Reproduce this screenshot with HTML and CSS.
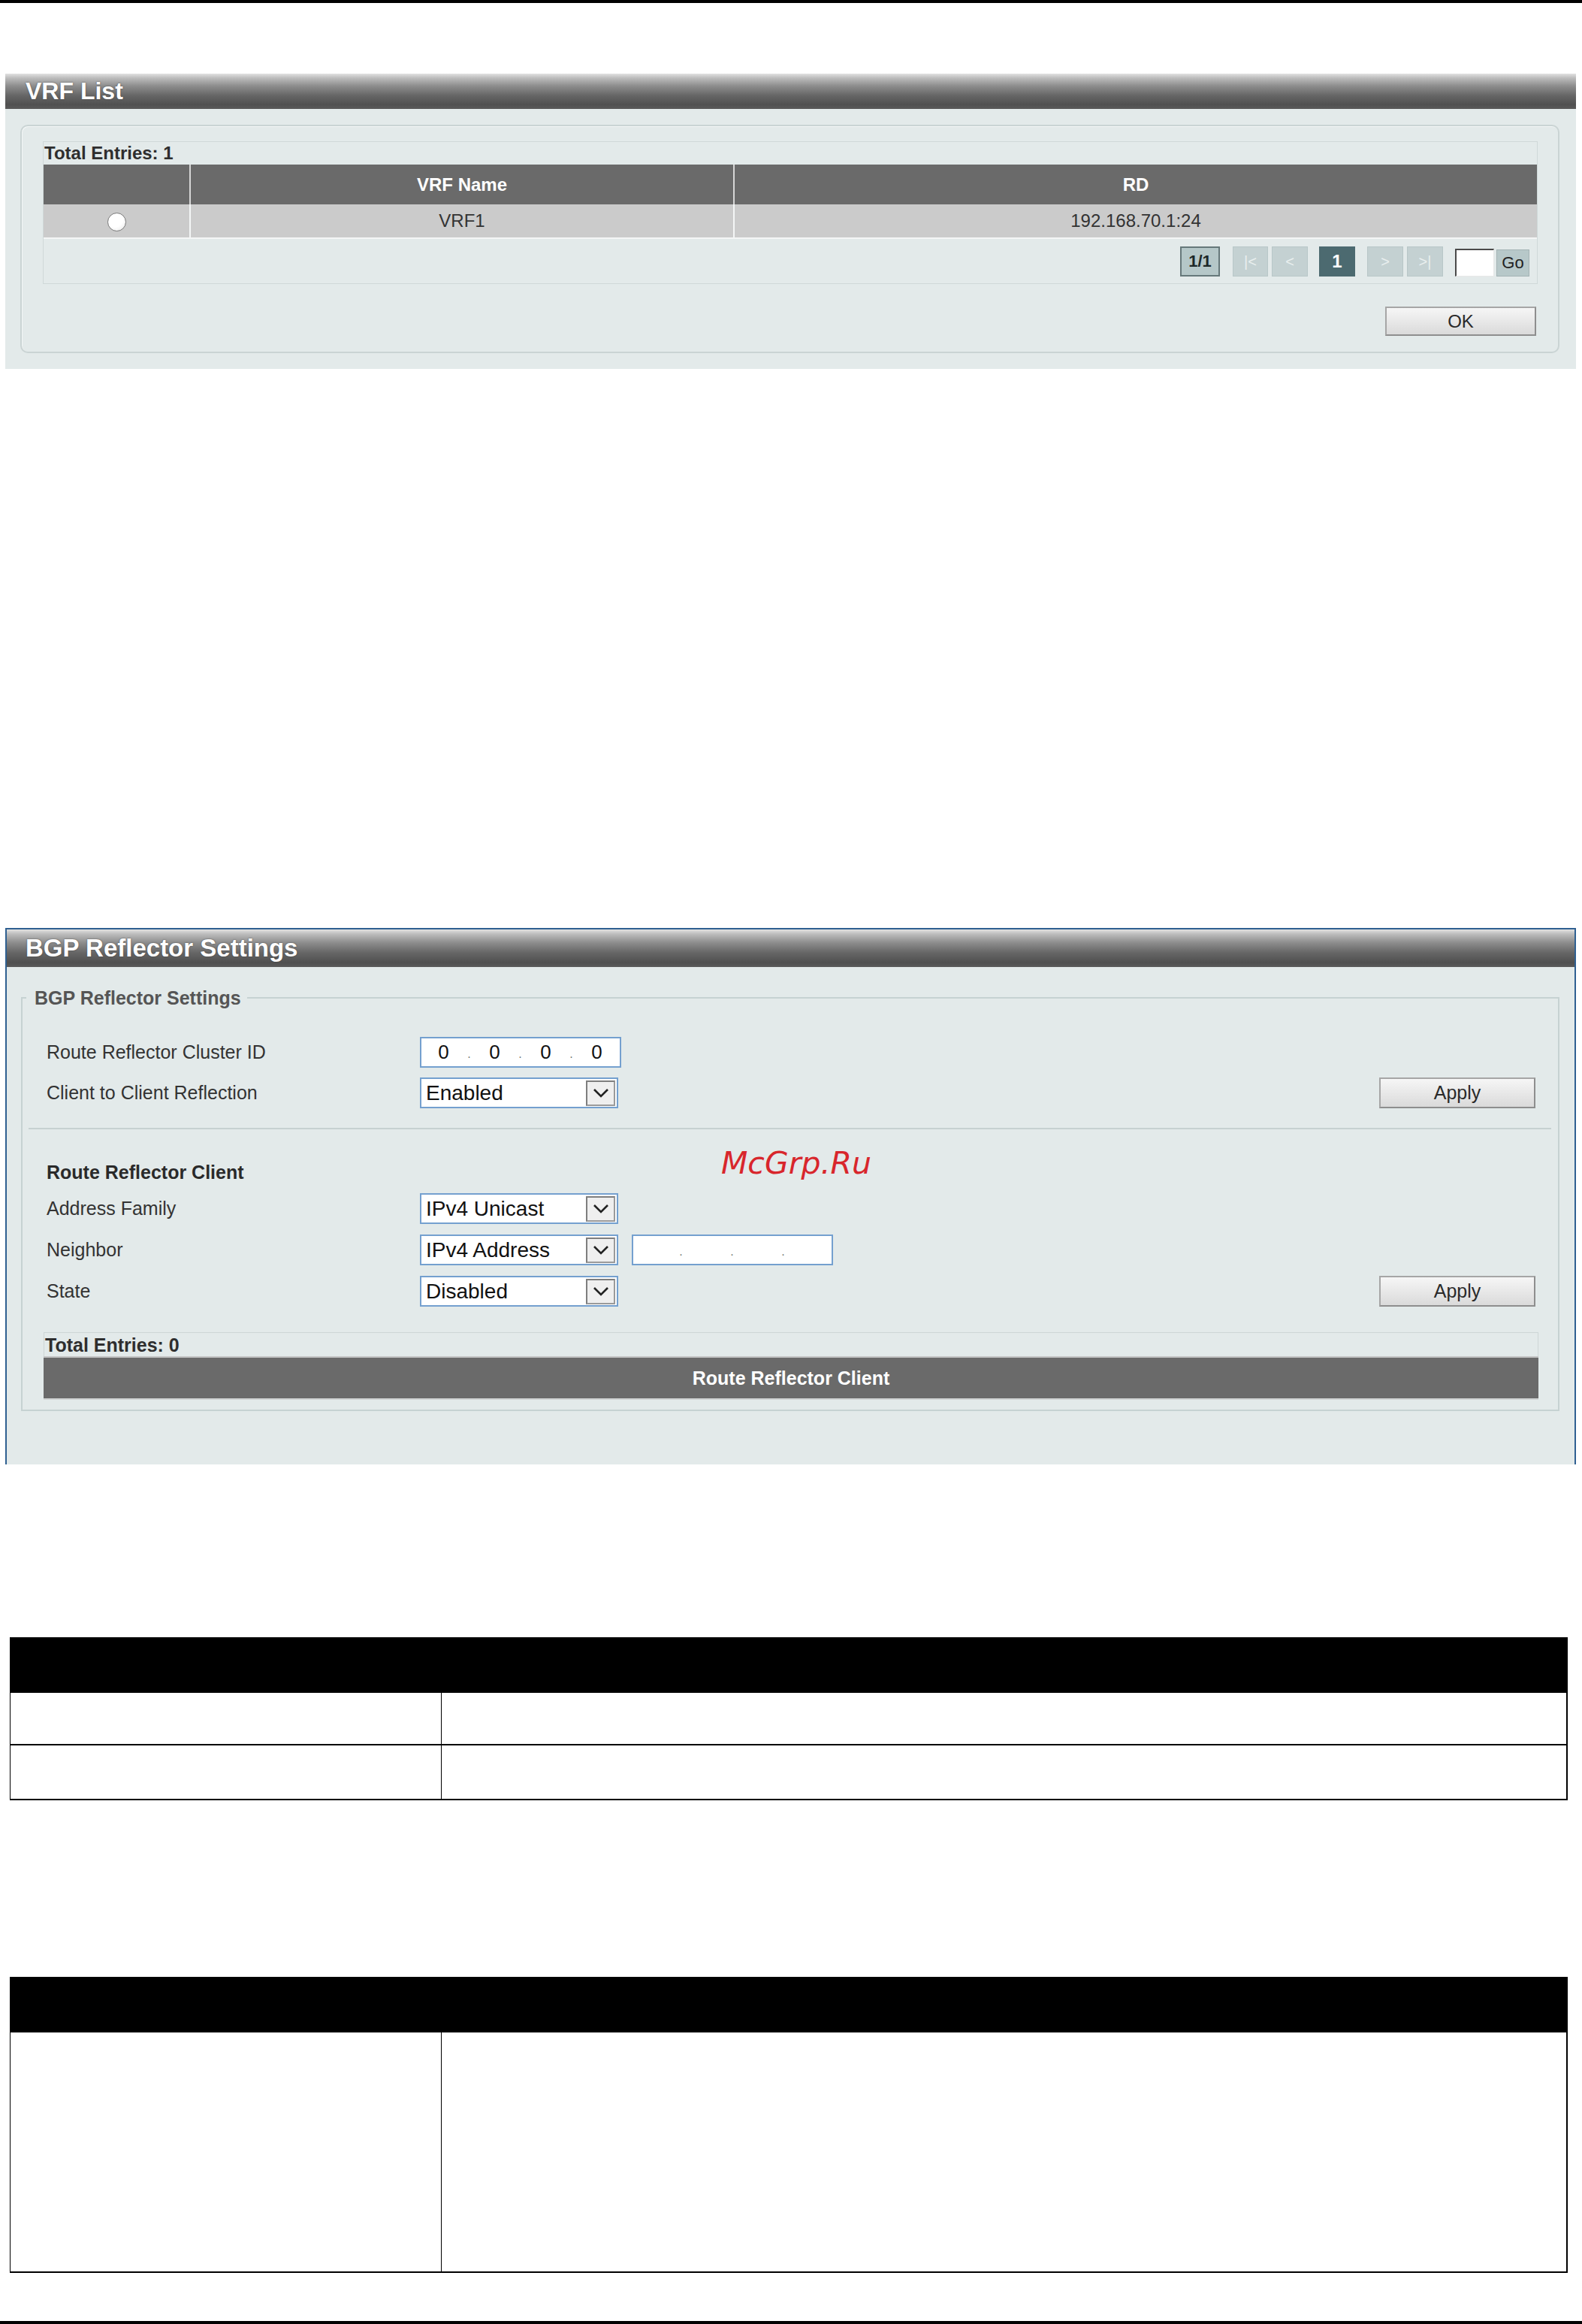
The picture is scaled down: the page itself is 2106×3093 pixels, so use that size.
FILE: index.html
```html
<!DOCTYPE html>
<html>
<head>
<meta charset="utf-8">
<link rel="stylesheet" href="styles.css">
</head>
<body>
<div class="topline"></div>

<section class="panel p1">
  <div class="phead">VRF List</div>
  <div class="pbody b1">
    <div class="rbox">
      <div class="listbox">
        <div class="total">Total Entries: 1</div>
        <div class="grid ghead">
          <div class="gc gc1"></div>
          <div class="gc gc2">VRF Name</div>
          <div class="gc gc3">RD</div>
        </div>
        <div class="grid grow">
          <div class="gc gc1"><span class="radio"></span></div>
          <div class="gc gc2">VRF1</div>
          <div class="gc gc3">192.168.70.1:24</div>
        </div>
        <div class="pager">
          <span class="pg cur">1/1</span>
          <span class="pg dis sp17">|&lt;</span>
          <span class="pg dis sp5">&lt;</span>
          <span class="pg act sp15">1</span>
          <span class="pg dis sp16">&gt;</span>
          <span class="pg dis sp5">&gt;|</span>
          <span class="pgin sp16"></span>
          <span class="pg go sp3">Go</span>
        </div>
      </div>
      <div class="okrow"><span class="btn ok">OK</span></div>
    </div>
  </div>
</section>

<section class="panel p2">
  <div class="phead h2">BGP Reflector Settings</div>
  <div class="pbody b2">
    <fieldset class="fs">
      <legend class="lg">BGP Reflector Settings</legend>
      <div class="fsin">
        <div class="frow r1">
          <span class="lbl">Route Reflector Cluster ID</span>
          <span class="ip">
            <span class="oct">0</span><span class="dot">.</span><span class="oct">0</span><span class="dot">.</span><span class="oct">0</span><span class="dot">.</span><span class="oct">0</span>
          </span>
        </div>
        <div class="frow r2">
          <span class="lbl">Client to Client Reflection</span>
          <span class="sel"><span class="stx">Enabled</span><span class="arr"><svg width="22" height="14" viewBox="0 0 22 14"><polyline points="2,2 11,11 20,2" fill="none" stroke="#222" stroke-width="2.6"/></svg></span></span>
          <span class="btn apply">Apply</span>
        </div>
        <div class="sep"></div>
        <div class="subhead">Route Reflector Client</div>
        <div class="frow r3">
          <span class="lbl">Address Family</span>
          <span class="sel"><span class="stx">IPv4 Unicast</span><span class="arr"><svg width="22" height="14" viewBox="0 0 22 14"><polyline points="2,2 11,11 20,2" fill="none" stroke="#222" stroke-width="2.6"/></svg></span></span>
        </div>
        <div class="frow r3">
          <span class="lbl">Neighbor</span>
          <span class="sel"><span class="stx">IPv4 Address</span><span class="arr"><svg width="22" height="14" viewBox="0 0 22 14"><polyline points="2,2 11,11 20,2" fill="none" stroke="#222" stroke-width="2.6"/></svg></span></span>
          <span class="ip nb">
            <span class="oct"></span><span class="dot">.</span><span class="oct"></span><span class="dot">.</span><span class="oct"></span><span class="dot">.</span><span class="oct"></span>
          </span>
        </div>
        <div class="frow r3">
          <span class="lbl">State</span>
          <span class="sel"><span class="stx">Disabled</span><span class="arr"><svg width="22" height="14" viewBox="0 0 22 14"><polyline points="2,2 11,11 20,2" fill="none" stroke="#222" stroke-width="2.6"/></svg></span></span>
          <span class="btn apply">Apply</span>
        </div>
        <div class="clientbox">
          <div class="total t0">Total Entries: 0</div>
          <div class="chead">Route Reflector Client</div>
        </div>
      </div>
    </fieldset>
  </div>
</section>

<div class="watermark">McGrp.Ru</div>

<div class="dtable t1">
  <div class="dhead"></div>
  <div class="drow h70"><div class="dc1"></div><div class="dc2"></div></div>
  <div class="drow h73"><div class="dc1"></div><div class="dc2"></div></div>
</div>

<div class="dtable t2">
  <div class="dhead"></div>
  <div class="drow h320"><div class="dc1"></div><div class="dc2"></div></div>
</div>

<div class="footline"></div>
</body>
</html>
```

FILE: styles.css
```css
* { box-sizing: border-box; }
html, body { margin: 0; padding: 0; background: #fff; }
body {
  width: 2106px;
  height: 3093px;
  overflow: hidden;
  position: relative;
  font-family: "Liberation Sans", Arial, sans-serif;
  color: #333;
}

.topline { height: 4px; background: #000; }

/* ---------- panels ---------- */
.panel { margin-left: 7px; width: 2091px; }
.p1 { margin-top: 94px; }
.p2 {
  margin-top: 744px;
  border: 2px solid #2f6091;
  border-bottom: none;
}

.phead {
  height: 47px;
  line-height: 47px;
  padding-left: 27px;
  color: #fff;
  font-weight: bold;
  font-size: 32px;
  text-shadow: 0 0 2px #444;
  background: linear-gradient(#e2e2e2 0%, #bdbdbd 12%, #8d8d8d 35%, #666 62%, #505050 88%, #5a5a5a 100%);
}
.h2 { height: 50px; line-height: 50px; padding-left: 25px; font-size: 33px; }

.pbody { background: #e3eaea; }
.b1 { height: 346px; padding: 21px 22px 0 20px; }
.b2 { height: 662px; padding: 27px 20px 0 19px; }

/* ---------- VRF list ---------- */
.rbox {
  height: 304px;
  border: 2px solid #cad4d4;
  border-radius: 10px;
  padding: 20px 27px 0 28px;
  box-shadow: inset 1px 1px 0 #f3f6f6;
}
.listbox {
  height: 190px;
  border: 1px solid #cfd8d8;
}
.total {
  height: 27px;
  line-height: 29px;
  padding-left: 1px;
  font-size: 24px;
  font-weight: bold;
  color: #2e2e2e;
  margin-bottom: 3px;
}
.grid {
  display: grid;
  grid-template-columns: 194px 724px 1fr;
}
.gc {
  text-align: center;
  font-size: 24px;
  display: flex;
  align-items: center;
  justify-content: center;
}
.ghead { height: 53px; background: #6a6a6a; }
.ghead .gc { color: #fff; font-weight: bold; }
.ghead .gc2, .ghead .gc3 { border-left: 2px solid #d6d6d6; }
.grow { height: 46px; background: #cbcbcb; border-bottom: 2px solid #f4f6f6; }
.grow .gc { color: #333; }
.grow .gc2, .grow .gc3 { border-left: 2px solid #f4f6f6; }
.radio {
  width: 25px;
  height: 25px;
  border-radius: 50%;
  border: 1px solid #7a7a7a;
  background: radial-gradient(circle at 40% 35%, #fff 0%, #fff 50%, #e4e4e4 100%);
  margin-top: 2px;
}

.pager {
  height: 58px;
  display: flex;
  justify-content: flex-end;
  align-items: flex-end;
  padding: 0 10px 8px 0;
}
.pg {
  height: 40px;
  width: 48px;
  display: flex;
  align-items: center;
  justify-content: center;
  font-size: 22px;
}
.cur {
  width: 53px;
  background: #b5c7c8;
  border: 2px solid #66787a;
  color: #1d2828;
  font-weight: bold;
}
.dis {
  background: #c4d1d2;
  border: 1px solid #b8c7c8;
  color: #e9efef;
  font-size: 20px;
}
.sp17 { margin-left: 17px; width: 47px; }
.sp5 { margin-left: 5px; }
.sp15 { margin-left: 15px; }
.sp16 { margin-left: 16px; }
.sp3 { margin-left: 3px; }
.act {
  background: #4c6a70;
  color: #fff;
  font-weight: bold;
  font-size: 24px;
}
.pgin {
  width: 52px;
  height: 37px;
  background: #fff;
  border-top: 2px solid #4a4a4a;
  border-left: 2px solid #4a4a4a;
  border-right: 1px solid #e8e8e8;
  border-bottom: 1px solid #e8e8e8;
}
.go {
  width: 44px;
  height: 36px;
  background: #b7c8c9;
  border: 1px solid #a3b3b4;
  color: #222;
  font-size: 22px;
}

.okrow {
  margin-top: 30px;
  display: flex;
  justify-content: flex-end;
  padding-right: 2px;
}

/* ---------- buttons ---------- */
.btn {
  display: flex;
  align-items: center;
  justify-content: center;
  font-size: 24px;
  color: #2a2a2a;
  background: linear-gradient(#f6f6f6, #dadada);
  border: 2px solid #8e8e8e;
  border-top-color: #a6a6a6;
  border-left-color: #a6a6a6;
}
.ok { width: 201px; height: 39px; }
.apply { width: 208px; height: 41px; margin-left: auto; font-size: 25px; }

/* ---------- BGP fieldset ---------- */
.fs {
  margin: 0;
  padding: 0;
  border: 2px solid #c6d2d2;
  height: 564px;
}
.lg {
  margin-left: 5px;
  padding: 0 8px 0 11px;
  font-size: 25px;
  line-height: 28px;
  font-weight: bold;
  color: #555;
}
.fsin { padding: 38px 30px 0 32px; }

.frow {
  display: flex;
  align-items: center;
  height: 41px;
}
.r2 { margin-top: 13px; }
.r3 { margin-top: 14px; }
.lbl {
  width: 497px;
  font-size: 25px;
  color: #333;
}
.ip {
  width: 268px;
  height: 41px;
  background: #fff;
  border: 2px solid #74a0cf;
  display: flex;
  align-items: center;
}
.ip.nb { margin-left: 18px; }
.oct {
  width: 59px;
  text-align: center;
  font-size: 26px;
  color: #111;
}
.dot {
  width: 9px;
  text-align: center;
  font-size: 16px;
  color: #777;
  line-height: 1;
  padding-top: 4px;
}
.sel {
  width: 264px;
  height: 41px;
  background: #fff;
  border: 2px solid #74a0cf;
  display: flex;
  align-items: center;
}
.stx {
  flex: 1;
  padding-left: 6px;
  font-size: 28px;
  color: #111;
  white-space: nowrap;
}
.arr {
  width: 39px;
  height: 34px;
  margin-right: 2px;
  background: #efefef;
  border: 2px solid #7e7e7e;
  border-right-color: #9a9a9a;
  border-bottom-color: #9a9a9a;
  display: flex;
  align-items: center;
  justify-content: center;
}

.sep {
  margin: 26px -21px 0 -24px;
  height: 2px;
  background: #c6d1d1;
}
.subhead {
  margin-top: 43px;
  height: 28px;
  line-height: 28px;
  font-size: 25px;
  font-weight: bold;
  color: #2a2a2a;
}

.clientbox {
  margin: 34px -4px 0 -4px;
  border: 1px solid #cdd6d6;
  border-bottom: none;
}
.t0 { height: 31px; line-height: 32px; margin-bottom: 0; padding-left: 1px; font-size: 25px; }
.chead {
  height: 58px;
  border-top: 2px solid #c3c3c3;
  border-bottom: 2px solid #cfd3d3;
  background: #6a6a6a;
  color: #fff;
  font-size: 25px;
  font-weight: bold;
  display: flex;
  align-items: center;
  justify-content: center;
  margin: 0 -1px;
}

.watermark {
  position: absolute;
  left: 960px;
  top: 1528px;
  font-family: "DejaVu Sans", sans-serif;
  font-style: italic;
  font-size: 41px;
  line-height: 40px;
  color: #d8262c;
}

/* ---------- document tables ---------- */
.dtable {
  margin-left: 13px;
  width: 2074px;
  border-left: 1px solid #000;
  border-right: 2px solid #000;
}
.t1 { margin-top: 230px; }
.t2 { margin-top: 235px; }
.dhead { height: 74px; background: #000; }
.drow {
  display: grid;
  grid-template-columns: 574px 1fr;
  border-bottom: 2px solid #000;
}
.dc1 { border-right: 1px solid #000; }
.h70 { height: 70px; }
.h73 { height: 73px; }
.h320 { height: 320px; }

.footline {
  margin-top: 64px;
  height: 4px;
  background: #000;
}
```
